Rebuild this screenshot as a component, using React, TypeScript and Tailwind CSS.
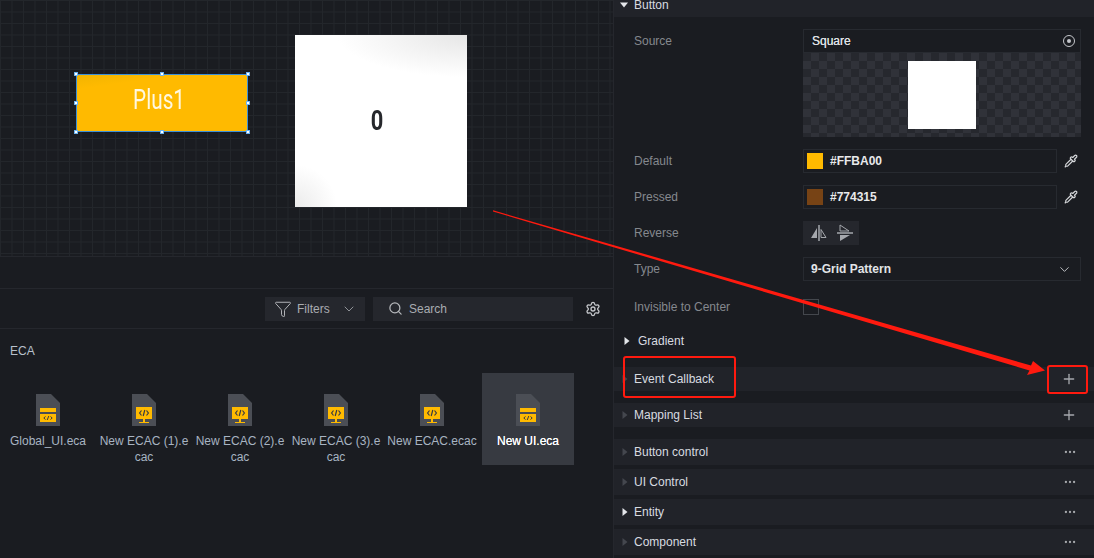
import React from "react";
import { ChevronDown, Pipette, Plus, Ellipsis, Search, Funnel, Settings } from "lucide-react";

function Tri({ dim, down }: { dim?: boolean; down?: boolean }) {
  return (
    <svg width="8" height="8" viewBox="0 0 8 8" className="shrink-0">
      {down ? (
        <path d="M0 1.5h8L4 6.5z" fill="#e4e6ea" />
      ) : (
        <path d="M1.5 0v8L6.5 4z" fill={dim ? "#44474e" : "#e4e6ea"} />
      )}
    </svg>
  );
}

function FileIcon({ kind }: { kind: "eca" | "ecac" }) {
  return (
    <svg width="24" height="32" viewBox="0 0 24 32" className="block">
      <path d="M0 0h15l9 9v23H0z" fill="#4b4e55" />
      {kind === "eca" ? (
        <>
          <rect x="4" y="14" width="16" height="4" fill="#ffba00" />
          <rect x="4" y="20" width="16" height="8" fill="#ffba00" />
          <path d="M9.5 22.5 7.8 24l1.7 1.5M14.5 22.5l1.7 1.5-1.7 1.500M12.8 22l-1.600 4" stroke="#3a3c42" strokeWidth="1" fill="none" />
        </>
      ) : (
        <>
          <rect x="4" y="13" width="16" height="12" fill="#ffba00" />
          <path d="M11 25h2v3h-2zM7 28h10v1H7z" fill="#ffba00" />
          <path d="M9.500 16.500 7.600 19l1.900 2.500M14.500 16.500l1.900 2.500-1.900 2.500M12.800 16l-1.600 6" stroke="#3a3c42" strokeWidth="1.200" fill="none" />
        </>
      )}
    </svg>
  );
}

function Handle({ className }: { className: string }) {
  return <span className={`absolute h-[4px] w-[4px] border border-[#6fb4ee] bg-white ${className}`} />;
}

function PropRow({ label, children, className = "" }: { label: string; children: React.ReactNode; className?: string }) {
  return (
    <div className={`flex items-center pl-[20px] ${className}`}>
      <span className="w-[169px] shrink-0 text-[#85888e]">{label}</span>
      {children}
    </div>
  );
}

function ColorRow({ label, color }: { label: string; color: string }) {
  return (
    <PropRow label={label} className="mt-3 h-6">
      <div className="flex h-6 w-[254px] items-center border border-[#272a30] pl-[3px]">
        <span className="h-4 w-4" style={{ backgroundColor: color }} />
        <span className="ml-[7px] font-bold text-[#e8e9eb]">{color}</span>
      </div>
      <Pipette size={14} color="#d5d7da" className="ml-[7px]" />
    </PropRow>
  );
}

function SectionRow({ label, action, bright }: { label: string; action: "plus" | "more"; bright?: boolean }) {
  return (
    <div className={`flex items-center bg-[#212329] pl-[7px] pr-[17px] ${action === "plus" ? "h-6" : "h-[26px]"}`}>
      <Tri dim={!bright} />
      <span className="ml-[5px] flex-1 text-[#d8dbe0]">{label}</span>
      {action === "plus" ? <Plus size={16} color="#a5a8ad" /> : <Ellipsis size={14} color="#a5a8ac" />}
    </div>
  );
}

const files: { name: string; kind: "eca" | "ecac"; selected?: boolean }[] = [
  { name: "Global_UI.eca", kind: "eca" },
  { name: "New ECAC (1).ecac", kind: "ecac" },
  { name: "New ECAC (2).ecac", kind: "ecac" },
  { name: "New ECAC (3).ecac", kind: "ecac" },
  { name: "New ECAC.ecac", kind: "ecac" },
  { name: "New UI.eca", kind: "eca", selected: true },
];

export default function App() {
  return (
    <div className="relative flex h-[558px] w-[1094px] overflow-hidden bg-[#1a1c21] font-['Liberation_Sans',sans-serif] text-[12px] leading-4">
      {/* Left side */}
      <div className="flex w-[613px] shrink-0 flex-col">
        <div className="relative h-[257px] border-b border-[#25272d] bg-[linear-gradient(#23262b_1px,transparent_1px),linear-gradient(90deg,#23262b_1px,transparent_1px)] bg-[size:11.500px_11.500px]">
          <div className="absolute left-[76px] top-[74px] h-[58px] w-[172px] border border-[#3b8fd8] bg-[linear-gradient(172deg,#f2b400_0,#ffba00_18%,#ffba00_100%)]">
            <span className="flex h-full items-center justify-center pb-[7px] pr-[6px]">
              <span className="inline-block scale-x-[0.74] font-['Roboto',sans-serif] text-[28px] font-normal text-[#fff8e0] blur-[0.3px]">Plus1</span>
            </span>
            <Handle className="-left-[3px] -top-[3px]" />
            <Handle className="left-[83px] -top-[3px]" />
            <Handle className="-right-[3px] -top-[3px]" />
            <Handle className="-left-[3px] top-[26px]" />
            <Handle className="-right-[3px] top-[26px]" />
            <Handle className="-bottom-[3px] -left-[3px]" />
            <Handle className="-bottom-[3px] left-[83px]" />
            <Handle className="-bottom-[3px] -right-[3px]" />
          </div>
          <div className="absolute left-[295px] top-[35px] flex h-[172px] w-[172px] items-center justify-center bg-white bg-[radial-gradient(ellipse_130px_42px_at_100%_0,#e6e6e6,transparent),radial-gradient(circle_42px_at_0_100%,#ebebeb,transparent)]">
            <span className="mr-[8px] inline-block scale-x-[0.78] font-['Roboto',sans-serif] text-[28px] font-bold text-[#26282c] blur-[0.3px]">0</span>
          </div>
        </div>
        <div className="h-[32px] border-b border-[#25272d]" />
        <div className="flex h-[40px] items-center justify-end border-b border-[#25272d] pr-[12px]">
          <div className="flex h-6 w-[100px] items-center bg-[#25272d] pl-[9px] text-[#a9acb1]">
            <Funnel size={18} color="#b5b7bb" strokeWidth={1.300} />
            <span className="ml-[5px] flex-1">Filters</span>
            <ChevronDown size={16} color="#a0a3a8" className="mr-[8px]" strokeWidth={1.300} />
          </div>
          <div className="ml-2 flex h-6 w-[200px] items-center bg-[#25272d] pl-[15px] text-[#a9acb1]">
            <Search size={15} color="#b5b7bb" />
            <span className="ml-[6px]">Search</span>
          </div>
          <Settings size={16} color="#c5c7cb" className="ml-[12px]" />
        </div>
        <div className="pl-[10px] pt-[14px] text-[#b7c0cb]">ECA</div>
        <div className="ml-[2px] mt-[14px] flex gap-1">
          {files.map((f) => (
            <div key={f.name} className={`flex h-[92px] w-[92px] flex-col items-center pt-[21px] ${f.selected ? "bg-[#373a41]" : ""}`}>
              <FileIcon kind={f.kind} />
              <div className={`mt-[7px] w-full break-all text-center ${f.selected ? "text-white [text-shadow:0_0_0.4px_#ffffff]" : "text-[#a8b4c2]"}`}>{f.name}</div>
            </div>
          ))}
        </div>
      </div>

      {/* Right panel */}
      <div className="w-[481px] shrink-0 border-l border-[#25272d]">
        <div className="-mt-[8px] flex h-[25px] items-center bg-[#212329] pl-[6px]">
          <Tri down />
          <span className="ml-[6px] text-[#d8dbe0]">Button</span>
        </div>
        <div className="mt-3 flex items-start pl-[20px]">
          <span className="w-[169px] shrink-0 leading-[24px] text-[#85888e]">Source</span>
          <div className="w-[278px]">
            <div className="flex h-6 items-center justify-between border border-[#272a30] pl-[8px] pr-[4px] text-[#dfe1e4]">
              <span className="[text-shadow:0_0_0.4px_#dfe1e4]">Square</span>
              <svg width="14" height="14" viewBox="0 0 14 14">
                <circle cx="7" cy="7" r="5.500" stroke="#c5c7cb" fill="none" />
                <circle cx="7" cy="7" r="2" fill="#c5c7cb" />
              </svg>
            </div>
            <div className="flex h-[84px] items-center justify-center bg-[conic-gradient(#303239_25%,#26282e_0_50%,#303239_0_75%,#26282e_0)] bg-[size:16px_16px]">
              <div className="h-[68px] w-[68px] bg-white" />
            </div>
          </div>
        </div>
        <ColorRow label="Default" color="#FFBA00" />
        <ColorRow label="Pressed" color="#774315" />
        <PropRow label="Reverse" className="mt-3 h-6">
          <div className="flex h-6 w-[56px] items-center justify-around bg-[#25272d] px-[2px]">
            <svg width="18" height="16" viewBox="0 0 18 16">
              <path d="M7 3v10H1z" fill="#a5a8ad" />
              <path d="M9 0v16" stroke="#a5a8ad" strokeWidth="1.500" />
              <path d="M11 4.500V12.500h5z" fill="none" stroke="#a5a8ad" />
            </svg>
            <svg width="16" height="18" viewBox="0 0 16 18">
              <path d="M3 1v6h9z" fill="none" stroke="#a5a8ad" />
              <path d="M0 9h16" stroke="#a5a8ad" strokeWidth="1.500" />
              <path d="M3 11h10L3 17z" fill="#a5a8ad" />
            </svg>
          </div>
        </PropRow>
        <PropRow label="Type" className="mt-3 h-6">
          <div className="flex h-6 w-[278px] items-center justify-between border border-[#272a30] pl-[7px] pr-[8px] font-bold text-[#e2e4e7]">
            <span>9-Grid Pattern</span>
            <ChevronDown size={15} color="#c5c7cb" strokeWidth={1.500} />
          </div>
        </PropRow>
        <PropRow label="Invisible to Center" className="mt-[18px] h-4">
          <span className="h-4 w-4 border border-[#44474d]" />
        </PropRow>
        <div className="mt-[18px] flex h-4 items-center pl-[9px] text-[#d8dbe0]">
          <Tri />
          <span className="ml-[7px]">Gradient</span>
        </div>
        <div className="mt-[18px] flex flex-col">
          <SectionRow label="Event Callback" action="plus" />
          <div className="mt-3">
            <SectionRow label="Mapping List" action="plus" />
          </div>
          <div className="mt-3 flex flex-col gap-1">
            <SectionRow label="Button control" action="more" />
            <SectionRow label="UI Control" action="more" />
            <SectionRow label="Entity" action="more" bright />
            <SectionRow label="Component" action="more" />
          </div>
        </div>
      </div>

      {/* Red annotations */}
      <svg className="pointer-events-none absolute left-0 top-0" width="1094" height="558" viewBox="0 0 1094 558">
        <path d="M493 210.300 L1031 365.500 L1033 361 L1045 370.500 L1027 375 L1029.500 370.500 L493 211.500 Z" fill="#ff1a0f" />
      </svg>
      <div className="pointer-events-none absolute left-[623px] top-[356px] h-[42px] w-[113px] rounded-[3px] border-2 border-[#ff1a0f]" />
      <div className="pointer-events-none absolute left-[1047px] top-[365px] h-[29px] w-[41px] rounded-[3px] border-2 border-[#ff1a0f]" />
    </div>
  );
}
